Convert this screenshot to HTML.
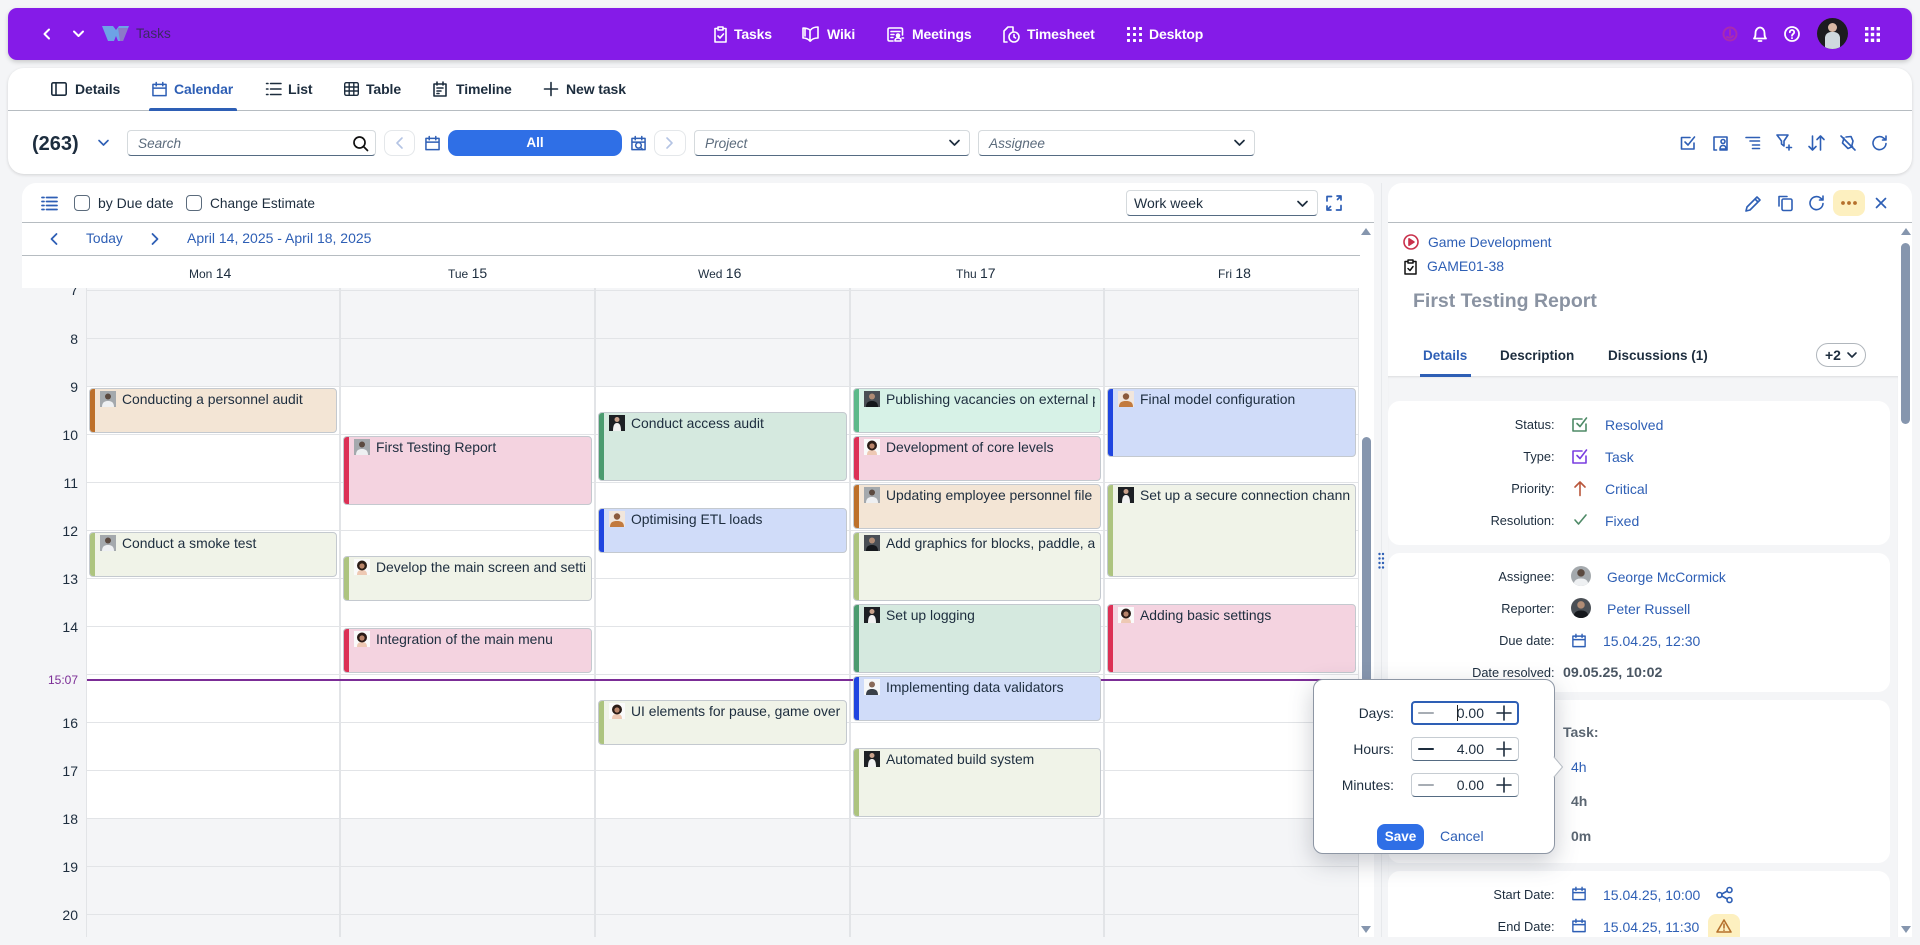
<!DOCTYPE html>
<html lang="en"><head><meta charset="utf-8"><title>Tasks</title>
<style>
html,body{margin:0;padding:0;width:1920px;height:945px;overflow:hidden;background:#f4f5f7;font-family:"Liberation Sans",sans-serif;color:#1d2d3e;font-size:14px}
div,span,svg{position:absolute;box-sizing:border-box}
.t{white-space:nowrap;line-height:18px;height:18px}
.b{font-weight:700}
svg{fill:none;stroke:currentColor;stroke-width:1.6;stroke-linecap:round;stroke-linejoin:round;overflow:visible}
.nv{color:#fff;font-weight:700;font-size:14px;top:25px;letter-spacing:-.15px}
.tb{font-weight:700;font-size:14px;top:80px;letter-spacing:-.1px;color:#1d2d3e}
.inp{background:#fff;border:1px solid #d5dadd;border-bottom:1px solid #556b82;border-radius:4px;height:26px;top:130px}
.ph{font-style:italic;color:#5b6b7c;font-size:13.6px;top:135px}
.ib{color:#2e5fb5}
.ev{border:1px solid #c4c9cf;border-radius:4px;overflow:hidden}
.ev i{position:absolute;left:-1px;top:-1px;bottom:-1px;width:5.5px;display:block}
.ev span{left:32px;top:1px;right:5px;height:18px;overflow:hidden;white-space:nowrap;line-height:18px;font-size:13.9px;color:#1d2d3e}
.ev svg{left:10px;top:2px;width:16px;height:16px;stroke:none;overflow:hidden}
.h{height:1px;background:#e2e4e7;left:87px;width:1271px}
.v{width:2px;background:#e2e4e7;top:288px;height:649px}
.hl{font-size:14px;color:#1d2d3e;line-height:18px;height:18px;width:30px;text-align:right;left:48px}
.lb{width:160px;left:1394.6px;text-align:right;font-size:12.8px;color:#1d2d3e;white-space:nowrap;line-height:18px;height:18px}
.val{color:#2e5fb5;font-size:14px;white-space:nowrap;line-height:18px;height:18px}
.card{left:1388px;width:502px;background:#fff;border-radius:12px}
.plb{width:80px;left:1314px;text-align:right;font-size:13.8px;color:#1d2d3e;line-height:18px;height:18px}
.pin{left:1411px;width:108px;height:24px;border:1px solid #c6ccd2;border-bottom:1px solid #556b82;border-radius:4px;background:#fff}
.pv{left:1440px;width:44px;text-align:right;font-size:14px;line-height:18px;height:18px}
.av{overflow:hidden;border-radius:50%;stroke:none}
</style></head><body>
<svg width="0" height="0" style="position:absolute"><defs>
<symbol id="cal" viewBox="0 0 16 16"><path d="M1 3h14v12H1zM1 7h14M4.500 1v3.500M11.500 1v3.500"/></symbol>
<symbol id="person" viewBox="0 0 16 16"><rect width="16" height="16" fill="#a4a9ad" stroke="none"/><path d="M2 16c0-5 3-6 6-6s6 1 6 6z" fill="#eef0f2" stroke="none"/><circle cx="8" cy="5.500" r="3" fill="#5b4a40" stroke="none"/></symbol>
<symbol id="dark" viewBox="0 0 16 16"><rect width="16" height="16" fill="#4a4f55" stroke="none"/><path d="M2 16c0-5 3-6 6-6s6 1 6 6z" fill="#15181c" stroke="none"/><circle cx="8" cy="5.500" r="3" fill="#b08c75" stroke="none"/></symbol>
<symbol id="woman" viewBox="0 0 16 16"><rect width="16" height="16" fill="#fafafa" stroke="none"/><path d="M3 16c0-4 2-5 5-5s5 1 5 5z" fill="#eec9b4" stroke="none"/><circle cx="8" cy="6.500" r="5" fill="#2a1c17" stroke="none"/><circle cx="8" cy="7" r="2.600" fill="#b8846a" stroke="none"/></symbol>
<symbol id="wd" viewBox="0 0 16 16"><rect width="16" height="16" fill="#1d2024" stroke="none"/><path d="M4 16c0-6 1.500-8 4-8s4 2 4 8z" fill="#f2f2f2" stroke="none"/><circle cx="8" cy="4.500" r="2.500" fill="#c9a28c" stroke="none"/></symbol>
<symbol id="org" viewBox="0 0 16 16"><rect width="16" height="16" fill="#f1e6dc" stroke="none"/><path d="M1 16c0-5 3-6 7-6s7 1 7 6z" fill="#c27a3e" stroke="none"/><circle cx="8" cy="5.500" r="3.200" fill="#8b5a3c" stroke="none"/></symbol>
<symbol id="man" viewBox="0 0 16 16"><rect width="16" height="16" fill="#f6f7f8" stroke="none"/><path d="M2 16c0-5 3-6 6-6s6 1 6 6z" fill="#3a4048" stroke="none"/><circle cx="8" cy="5.500" r="3" fill="#8a6a58" stroke="none"/></symbol>
</defs></svg>

<!-- top nav -->
<div style="left:8px;top:8px;width:1904px;height:52px;background:#851be8;border-radius:9px;box-shadow:0 2px 5px rgba(0,0,0,.18)"></div>
<svg style="left:43px;top:28px;width:8px;height:12px;color:#fff;stroke-width:2" viewBox="0 0 8 12"><path d="M6 1.500 1.500 6 6 10.500"/></svg>
<svg style="left:73px;top:30px;width:11px;height:8px;color:#fff;stroke-width:2" viewBox="0 0 11 8"><path d="M1 1.500 5.500 6 10 1.500"/></svg>
<svg style="left:102px;top:25px;width:27px;height:17px;stroke:none" viewBox="0 0 27 17"><path d="M0 1h11l3 4 3-4h10l-6 15h-5l-2-5-2 5H6z" fill="#6da3e6"/><path d="M16 3h10l-5 13h-3z" fill="#8c78c8"/></svg>
<div class="t" style="left:136px;top:25px;font-size:13.6px;color:#3b2a63">Tasks</div>

<svg style="left:714px;top:26px;width:13px;height:17px;color:#fff" viewBox="0 0 13 17"><path d="M4 2.500H1v13.500h11V2.500H9M4 1h5v3H4zM4 10l2 2 3.500-4"/></svg>
<div class="t nv" style="left:734px">Tasks</div>
<svg style="left:802px;top:26px;width:17px;height:16px;color:#fff" viewBox="0 0 17 16"><path d="M1 2v10c3 0 5 1 7 3V4C6 2.500 4 2 1 2zM8.500 15c1.500-2 4-3 7.500-3V1c-3 0-6 1-7.500 3M3 2v8"/></svg>
<div class="t nv" style="left:827px">Wiki</div>
<svg style="left:887px;top:27px;width:17px;height:15px;color:#fff" viewBox="0 0 17 15"><path d="M6 14H2.500Q1 14 1 12.500V2.500Q1 1 2.500 1h11.500Q15.500 1 15.500 2.500V8M4 4.500h9M4 7.500h3M4 10.500h2"/><circle cx="11" cy="8.500" r="1.500" fill="#fff"/><path d="M8 14c0-3 2-3 3-3s3 0 3 3zM15 11h1.500"/></svg>
<div class="t nv" style="left:912px">Meetings</div>
<svg style="left:1003px;top:26px;width:17px;height:17px;color:#fff" viewBox="0 0 17 17"><path d="M4 16H1V5l4-4h5v4"/><circle cx="11" cy="11" r="5"/><path d="M11 8.500V11l1.500 1"/></svg>
<div class="t nv" style="left:1027px">Timesheet</div>
<svg style="left:1127px;top:27px;width:15px;height:15px;stroke:none;fill:#fff" viewBox="0 0 15 15"><rect width="3" height="3" rx=".6"/><rect x="6" width="3" height="3" rx=".6"/><rect x="12" width="3" height="3" rx=".6"/><rect y="6" width="3" height="3" rx=".6"/><rect x="6" y="6" width="3" height="3" rx=".6"/><rect x="12" y="6" width="3" height="3" rx=".6"/><rect y="12" width="3" height="3" rx=".6"/><rect x="6" y="12" width="3" height="3" rx=".6"/><rect x="12" y="12" width="3" height="3" rx=".6"/></svg>
<div class="t nv" style="left:1149px">Desktop</div>

<svg style="left:1722px;top:26px;width:16px;height:16px;color:#a92bb0;stroke-width:2" viewBox="0 0 16 16"><circle cx="8" cy="8" r="6.500"/><path d="M8 4v5M5 11c2 1 4 1 6-1"/></svg>
<svg style="left:1753px;top:26px;width:14px;height:16px;color:#fff;stroke-width:1.800" viewBox="0 0 14 16"><path d="M1 12.500c1.500-1.500 1.500-3 1.500-5.500C2.500 4 4.500 1.500 7 1.500S11.500 4 11.500 7c0 2.500 0 4 1.500 5.500z"/><path d="M5.500 15h3"/></svg>
<svg style="left:1784px;top:26px;width:16px;height:16px;color:#fff;stroke-width:1.800" viewBox="0 0 16 16"><circle cx="8" cy="8" r="7"/><path d="M5.800 6.200C5.800 4.900 6.800 4 8 4s2.200.9 2.200 2.200C10.200 8 8 8 8 9.800M8 12v.2"/></svg>
<div style="left:1817px;top:18px;width:31px;height:31px;border-radius:50%;background:#1c1c20;overflow:hidden"><div style="left:11px;top:5px;width:9px;height:9px;border-radius:50%;background:#d8b8a4"></div><div style="left:8px;top:14px;width:15px;height:18px;border-radius:6px 6px 0 0;background:#cfd8de"></div></div>
<svg style="left:1865px;top:27px;width:15px;height:15px;stroke:none;fill:#fff" viewBox="0 0 15 15"><rect width="3.400" height="3.400"/><rect x="5.800" width="3.400" height="3.400"/><rect x="11.600" width="3.400" height="3.400"/><rect y="5.800" width="3.400" height="3.400"/><rect x="5.800" y="5.800" width="3.400" height="3.400"/><rect x="11.600" y="5.800" width="3.400" height="3.400"/><rect y="11.600" width="3.400" height="3.400"/><rect x="5.800" y="11.600" width="3.400" height="3.400"/><rect x="11.600" y="11.600" width="3.400" height="3.400"/></svg>

<!-- tabs panel -->
<div style="left:8px;top:68px;width:1904px;height:106px;background:#fff;border-radius:16px;box-shadow:0 1px 3px rgba(0,0,0,.14)"></div>
<div style="left:8px;top:110px;width:1904px;height:1px;background:#b6bcc1"></div>
<svg style="left:51px;top:82px;width:16px;height:14px;color:#1d2d3e" viewBox="0 0 16 14"><rect x=".8" y=".8" width="14.400" height="12.400" rx="1.500"/><path d="M5 1v12"/></svg>
<div class="t tb" style="left:75px">Details</div>
<svg style="left:152px;top:81px;width:15px;height:16px;color:#2e5fb5" viewBox="0 0 16 16"><use href="#cal"/></svg>
<div class="t tb" style="left:174px;color:#2e5fb5">Calendar</div>
<div style="left:149px;top:108px;width:88px;height:2.500px;background:#2e5fb5;border-radius:2px 2px 0 0"></div>
<svg style="left:266px;top:82px;width:15px;height:14px;color:#1d2d3e;stroke-width:1.500" viewBox="0 0 15 14"><path d="M4.500 1.500H15M4.500 7H15M4.500 12.500H15M.5 1.500h1.500M.5 7h1.500M.5 12.500h1.500"/></svg>
<div class="t tb" style="left:288px">List</div>
<svg style="left:344px;top:82px;width:15px;height:14px;color:#1d2d3e;stroke-width:1.400" viewBox="0 0 15 14"><rect x=".7" y=".7" width="13.600" height="12.600" rx="1.500"/><path d="M.7 5h13.600M.7 9h13.600M5.200 .7v12.600M9.800 .7v12.600"/></svg>
<div class="t tb" style="left:366px">Table</div>
<svg style="left:433px;top:81px;width:14px;height:16px;color:#1d2d3e" viewBox="0 0 14 16"><path d="M1 3h12v12H1zM4 1v3M10 1v3M4 7h6M4 10h4M4 12.500h2"/></svg>
<div class="t tb" style="left:456px">Timeline</div>
<svg style="left:544px;top:82px;width:14px;height:14px;color:#1d2d3e" viewBox="0 0 14 14"><path d="M7 .5v13M.5 7h13"/></svg>
<div class="t tb" style="left:566px">New task</div>

<!-- toolbar -->
<div class="t b" style="left:32px;top:133px;font-size:20px;line-height:22px;height:22px">(263)</div>
<svg style="left:98px;top:139px;width:11px;height:8px;color:#2e5fb5" viewBox="0 0 11 8"><path d="M1 1.500 5.500 6 10 1.500"/></svg>
<div class="inp" style="left:127px;width:249px"></div>
<div class="t ph" style="left:138px">Search</div>
<svg style="left:353px;top:136px;width:15px;height:15px;color:#111;stroke-width:1.700" viewBox="0 0 15 15"><circle cx="6.500" cy="6.500" r="5.500"/><path d="M10.500 10.500 14.500 14.500"/></svg>
<div style="left:384px;top:130px;width:31px;height:26px;border:1px solid #e4e7ea;border-radius:8px;background:#fff"></div>
<svg style="left:396px;top:137px;width:7px;height:12px;color:#b4c4e4" viewBox="0 0 7 12"><path d="M6 1 1 6l5 5"/></svg>
<svg style="left:425px;top:135px;width:15px;height:16px;color:#2e5fb5" viewBox="0 0 16 16"><use href="#cal"/></svg>
<div style="left:448px;top:130px;width:174px;height:26px;background:#2f6fe6;border-radius:9px"></div>
<div class="t b" style="left:448px;top:134px;width:174px;text-align:center;color:#fff;font-size:13.500px">All</div>
<svg style="left:631px;top:135px;width:15px;height:16px;color:#2e5fb5" viewBox="0 0 16 16"><use href="#cal"/><circle cx="8" cy="10.500" r="3"/><path d="M10 12.500l2.500 2.500"/></svg>
<div style="left:654px;top:130px;width:32px;height:26px;border:1px solid #e4e7ea;border-radius:8px;background:#fff"></div>
<svg style="left:666px;top:137px;width:7px;height:12px;color:#b4c4e4" viewBox="0 0 7 12"><path d="M1 1l5 5-5 5"/></svg>
<div class="inp" style="left:694px;width:276px"></div>
<div class="t ph" style="left:705px">Project</div>
<svg style="left:949px;top:139px;width:11px;height:8px;color:#1d2d3e;stroke-width:1.700" viewBox="0 0 11 8"><path d="M1 1.500 5.500 6 10 1.500"/></svg>
<div class="inp" style="left:978px;width:277px"></div>
<div class="t ph" style="left:989px">Assignee</div>
<svg style="left:1234px;top:139px;width:11px;height:8px;color:#1d2d3e;stroke-width:1.700" viewBox="0 0 11 8"><path d="M1 1.500 5.500 6 10 1.500"/></svg>

<svg class="ib" style="left:1680px;top:135px;width:16px;height:16px" viewBox="0 0 16 16"><path d="M14 8v6H1.500V2.500H10M5 7l3 3 6.500-8"/></svg>
<svg class="ib" style="left:1713px;top:135px;width:15px;height:16px" viewBox="0 0 15 16"><path d="M3.500 15H1V2h13v13H7"/><circle cx="10" cy="6.500" r="2"/><path d="M7 14c0-3 1.500-3.500 3-3.500s3 .5 3 3.500z"/></svg>
<svg class="ib" style="left:1745px;top:136px;width:15px;height:14px" viewBox="0 0 15 14"><path d="M1 1.500h13.500M5 5h9.500M7.500 9h7M7.500 12.500h7"/></svg>
<svg class="ib" style="left:1776px;top:134px;width:17px;height:17px" viewBox="0 0 17 17"><path d="M1 1h11L8 7v5L5.500 10V7zM13 11v5M10.500 13.500h5"/></svg>
<svg class="ib" style="left:1808px;top:135px;width:17px;height:16px" viewBox="0 0 17 16"><path d="M4.500 1v14M1 11.500 4.500 15 8 11.500M12.500 15V1M9 4.500 12.500 1 16 4.500"/></svg>
<svg class="ib" style="left:1840px;top:135px;width:16px;height:16px" viewBox="0 0 16 16"><path d="M1 1l14 14M4 3 2.500 8l5.500 5.500 4.500-2M6 2l5-.5 2 4.500-1 4"/></svg>
<svg class="ib" style="left:1872px;top:135px;width:16px;height:16px" viewBox="0 0 16 16"><path d="M14 8.500A6.500 6.500 0 1 1 11.500 3L14 5V1M14 5h-3.500"/></svg>

<!-- calendar panel -->
<div style="left:22px;top:183px;width:1352px;height:105px;background:#fff;border-radius:14px 14px 0 0"></div>
<div style="left:1359px;top:183px;width:15px;height:754px;background:#fff;border-radius:0 14px 0 0"></div>
<div style="left:22px;top:222px;width:1352px;height:1px;background:#b6bcc1"></div>
<div style="left:22px;top:255px;width:1338px;height:1px;background:#b6bcc1"></div>
<svg style="left:42px;top:196px;width:15px;height:15px;color:#2e5fb5;stroke-width:1.800" viewBox="0 0 15 15"><path d="M4.500 1.500H15M4.500 5.500H15M4.500 9.500H15M4.500 13.500H15M0 1.500h2M0 5.500h2M0 9.500h2M0 13.500h2"/></svg>
<div style="left:74px;top:195px;width:16px;height:16px;border:1px solid #5b6b7c;border-radius:4px;background:#fff"></div>
<div class="t" style="left:98px;top:194px;font-size:14px">by Due date</div>
<div style="left:186px;top:195px;width:16px;height:16px;border:1px solid #5b6b7c;border-radius:4px;background:#fff"></div>
<div class="t" style="left:210px;top:195px;font-size:13.700px">Change Estimate</div>
<div style="left:1126px;top:190px;width:192px;height:26px;background:#fff;border:1px solid #d5dadd;border-bottom:1px solid #556b82;border-radius:4px"></div>
<div class="t" style="left:1134px;top:194px;font-size:14px">Work week</div>
<svg style="left:1297px;top:200px;width:11px;height:8px;color:#1d2d3e;stroke-width:1.700" viewBox="0 0 11 8"><path d="M1 1.500 5.500 6 10 1.500"/></svg>
<svg class="ib" style="left:1326px;top:195px;width:16px;height:16px;stroke-width:1.700" viewBox="0 0 16 16"><path d="M1 6V1.500h4.500M15 10.500V15h-4.500M11 1h4v4M15 1l-3.500 3.500M1 11v4h4M1 15l3.500-3.500"/></svg>
<svg style="left:50px;top:233px;width:8px;height:12px;color:#2e5fb5;stroke-width:1.800" viewBox="0 0 8 12"><path d="M6.500 1 1.500 6l5 5"/></svg>
<div class="t" style="left:86px;top:230px;color:#2e5fb5;font-size:13.800px">Today</div>
<svg style="left:151px;top:233px;width:8px;height:12px;color:#2e5fb5;stroke-width:1.800" viewBox="0 0 8 12"><path d="M1.500 1l5 5-5 5"/></svg>
<div class="t" style="left:187px;top:229px;color:#2e5fb5;font-size:14px">April 14, 2025 - April 18, 2025</div>
<div class="t" style="left:189px;top:264px;font-size:12px">Mon <span style="position:static;font-size:14px">14</span></div>
<div class="t" style="left:448px;top:264px;font-size:12px">Tue <span style="position:static;font-size:14px">15</span></div>
<div class="t" style="left:698px;top:264px;font-size:12px">Wed <span style="position:static;font-size:14px">16</span></div>
<div class="t" style="left:956px;top:264px;font-size:12px">Thu <span style="position:static;font-size:14px">17</span></div>
<div class="t" style="left:1218px;top:264px;font-size:12px">Fri <span style="position:static;font-size:14px">18</span></div>

<!-- grid -->
<div style="left:87px;top:288px;width:1271px;height:649px;background:#fff"></div>
<div style="left:87px;top:288px;width:1271px;height:98px;background:#f4f5f7"></div>
<div style="left:87px;top:818px;width:1271px;height:119px;background:#f4f5f7"></div>
<div class="h" style="top:290px"></div><div class="h" style="top:338px"></div><div class="h" style="top:386px"></div><div class="h" style="top:434px"></div><div class="h" style="top:482px"></div><div class="h" style="top:530px"></div><div class="h" style="top:578px"></div><div class="h" style="top:626px"></div><div class="h" style="top:674px"></div><div class="h" style="top:722px"></div><div class="h" style="top:770px"></div><div class="h" style="top:818px"></div><div class="h" style="top:866px"></div><div class="h" style="top:914px"></div>
<div class="v" style="left:86px;width:1px"></div><div class="v" style="left:339px"></div><div class="v" style="left:594px"></div><div class="v" style="left:849px"></div><div class="v" style="left:1103px"></div><div class="v" style="left:1358px;width:1px"></div>
<div style="left:48px;top:288px;width:30px;height:9px;overflow:hidden"><div class="hl" style="left:0;top:-7px">7</div></div>
<div class="hl" style="top:330px">8</div><div class="hl" style="top:378px">9</div><div class="hl" style="top:426px">10</div><div class="hl" style="top:474px">11</div><div class="hl" style="top:522px">12</div><div class="hl" style="top:570px">13</div><div class="hl" style="top:618px">14</div><div class="hl" style="top:714px">16</div><div class="hl" style="top:762px">17</div><div class="hl" style="top:810px">18</div><div class="hl" style="top:858px">19</div><div class="hl" style="top:906px">20</div>
<div class="hl" style="top:671px;font-size:12px;color:#7b2d96">15:07</div>

<!-- events -->
<div class="ev" style="left:89px;top:388px;width:248px;height:45px;background:#f3e5d5"><i style="background:#bd702a"></i><svg><use href="#person"/></svg><span>Conducting a personnel audit</span></div>
<div class="ev" style="left:89px;top:532px;width:248px;height:45px;background:#f0f3e8"><i style="background:#adc47f"></i><svg><use href="#person"/></svg><span>Conduct a smoke test</span></div>
<div class="ev" style="left:343px;top:436px;width:249px;height:69px;background:#f4d3e0"><i style="background:#dc3055"></i><svg><use href="#person"/></svg><span>First Testing Report</span></div>
<div class="ev" style="left:343px;top:556px;width:249px;height:45px;background:#f0f3e8"><i style="background:#adc47f"></i><svg><use href="#woman"/></svg><span>Develop the main screen and settings</span></div>
<div class="ev" style="left:343px;top:628px;width:249px;height:45px;background:#f4d3e0"><i style="background:#dc3055"></i><svg><use href="#woman"/></svg><span>Integration of the main menu</span></div>
<div class="ev" style="left:598px;top:412px;width:249px;height:69px;background:#d5e9df"><i style="background:#4b9b6f"></i><svg><use href="#wd"/></svg><span>Conduct access audit</span></div>
<div class="ev" style="left:598px;top:508px;width:249px;height:45px;background:#d0dcf9"><i style="background:#1f45e0"></i><svg><use href="#org"/></svg><span>Optimising ETL loads</span></div>
<div class="ev" style="left:598px;top:700px;width:249px;height:45px;background:#f0f3e8"><i style="background:#adc47f"></i><svg><use href="#woman"/></svg><span>UI elements for pause, game over</span></div>
<div class="ev" style="left:853px;top:388px;width:248px;height:45px;background:#d7f2e7"><i style="background:#5cb98a"></i><svg><use href="#dark"/></svg><span>Publishing vacancies on external platforms</span></div>
<div class="ev" style="left:853px;top:436px;width:248px;height:45px;background:#f4d3e0"><i style="background:#dc3055"></i><svg><use href="#woman"/></svg><span>Development of core levels</span></div>
<div class="ev" style="left:853px;top:484px;width:248px;height:45px;background:#f3e5d5"><i style="background:#bd702a"></i><svg><use href="#person"/></svg><span>Updating employee personnel file</span></div>
<div class="ev" style="left:853px;top:532px;width:248px;height:69px;background:#f0f3e8"><i style="background:#adc47f"></i><svg><use href="#dark"/></svg><span>Add graphics for blocks, paddle, and ball</span></div>
<div class="ev" style="left:853px;top:604px;width:248px;height:69px;background:#d5e9df"><i style="background:#4b9b6f"></i><svg><use href="#wd"/></svg><span>Set up logging</span></div>
<div style="left:87px;top:679px;width:1271px;height:2px;background:#7b2d96"></div>
<div class="ev" style="left:853px;top:676px;width:248px;height:45px;background:#d0dcf9"><i style="background:#1f45e0"></i><svg><use href="#man"/></svg><span>Implementing data validators</span></div>
<div class="ev" style="left:853px;top:748px;width:248px;height:69px;background:#f0f3e8"><i style="background:#adc47f"></i><svg><use href="#wd"/></svg><span>Automated build system</span></div>
<div class="ev" style="left:1107px;top:388px;width:249px;height:69px;background:#d0dcf9"><i style="background:#1f45e0"></i><svg><use href="#org"/></svg><span>Final model configuration</span></div>
<div class="ev" style="left:1107px;top:484px;width:249px;height:93px;background:#f0f3e8"><i style="background:#adc47f"></i><svg><use href="#wd"/></svg><span>Set up a secure connection channel</span></div>
<div class="ev" style="left:1107px;top:604px;width:249px;height:69px;background:#f4d3e0"><i style="background:#dc3055"></i><svg><use href="#woman"/></svg><span>Adding basic settings</span></div>

<!-- calendar scrollbar -->
<div style="left:1362px;top:437px;width:9px;height:343px;background:#8696ae;border-radius:5px"></div>
<svg style="left:1361px;top:228px;width:10px;height:7px;stroke:none;fill:#8696ae" viewBox="0 0 10 7"><path d="M5 0l5 7H0z"/></svg>
<svg style="left:1361px;top:926px;width:10px;height:7px;stroke:none;fill:#8696ae" viewBox="0 0 10 7"><path d="M0 0h10L5 7z"/></svg>

<!-- splitter -->
<div style="left:1381px;top:183px;width:1px;height:754px;background:#e7e9ec"></div>
<svg style="left:1378px;top:552px;width:7px;height:17px;stroke:none;fill:#2e5fb5;background:#f4f5f7" viewBox="0 0 7 17"><circle cx="1.500" cy="2" r="1.200"/><circle cx="5" cy="2" r="1.200"/><circle cx="1.500" cy="6.500" r="1.200"/><circle cx="5" cy="6.500" r="1.200"/><circle cx="1.500" cy="11" r="1.200"/><circle cx="5" cy="11" r="1.200"/><circle cx="1.500" cy="15.500" r="1.200"/><circle cx="5" cy="15.500" r="1.200"/></svg>

<!-- right panel -->
<div style="left:1388px;top:183px;width:524px;height:754px;background:#fff;border-radius:14px 14px 0 0"></div>
<div style="left:1388px;top:222px;width:524px;height:1px;background:#b6bcc1"></div>
<svg class="ib" style="left:1745px;top:195px;width:17px;height:17px" viewBox="0 0 17 17"><path d="M1 16l1-4L12 2l3 3L5 15zM10 4l3 3"/></svg>
<svg class="ib" style="left:1778px;top:195px;width:15px;height:16px" viewBox="0 0 15 16"><path d="M1 11V1.500h8"/><rect x="4" y="4" width="10" height="11.500" rx="1.500"/></svg>
<svg class="ib" style="left:1809px;top:195px;width:16px;height:16px" viewBox="0 0 16 16"><path d="M14 8.500A6.500 6.500 0 1 1 11.500 3L14 5V1M14 5h-3.500"/></svg>
<div style="left:1833px;top:190px;width:32px;height:26px;background:#fdf0c0;border-radius:8px"></div>
<svg style="left:1841px;top:201px;width:16px;height:4px;stroke:none;fill:#b5702c" viewBox="0 0 16 4"><circle cx="2" cy="2" r="1.900"/><circle cx="8" cy="2" r="1.900"/><circle cx="14" cy="2" r="1.900"/></svg>
<svg class="ib" style="left:1876px;top:198px;width:10px;height:10px;stroke-width:1.700" viewBox="0 0 10 10"><path d="M.5.500l9 9M9.500.500l-9 9"/></svg>
<svg style="left:1403px;top:234px;width:16px;height:16px;color:#c9304b;stroke:#c9304b" viewBox="0 0 16 16"><circle cx="8" cy="8" r="7"/><path d="M6 4.800v6.400L11 8z" fill="#c9304b"/></svg>
<div class="val" style="left:1428px;top:233px;font-size:13.900px">Game Development</div>
<svg style="left:1404px;top:259px;width:13px;height:16px;color:#111;stroke-width:1.500" viewBox="0 0 13 16"><path d="M4 2.500H1V15h11V2.500H9M4 1h5v3H4zM4 9.500l2 2 3-4"/></svg>
<div class="val" style="left:1427px;top:257px">GAME01-38</div>
<div class="t b" style="left:1413px;top:289px;font-size:19.500px;line-height:24px;height:24px;color:#8a93a2">First Testing Report</div>
<div class="t b" style="left:1423px;top:347px;color:#2e5fb5;font-size:13.500px">Details</div>
<div class="t b" style="left:1500px;top:347px;font-size:13.500px">Description</div>
<div class="t b" style="left:1608px;top:347px;font-size:13.500px">Discussions (1)</div>
<div style="left:1816px;top:343px;width:50px;height:24px;border:1px solid #b0b6bc;border-radius:12px;background:#fff"></div>
<div class="t b" style="left:1825px;top:346px;font-size:14px">+2</div>
<svg style="left:1847px;top:352px;width:10px;height:7px;color:#1d2d3e" viewBox="0 0 10 7"><path d="M1 1l4 4 4-4"/></svg>

<!-- details area -->
<div style="left:1388px;top:376px;width:510px;height:561px;background:#f4f5f7;box-shadow:inset 0 2px 2px -1px rgba(0,0,0,.1)"></div>
<div style="left:1420px;top:374px;width:51px;height:2.500px;background:#2e5fb5"></div>
<div style="left:1901px;top:243px;width:9px;height:181px;background:#8696ae;border-radius:5px"></div>
<svg style="left:1901px;top:228px;width:10px;height:7px;stroke:none;fill:#8696ae" viewBox="0 0 10 7"><path d="M5 0l5 7H0z"/></svg>
<svg style="left:1901px;top:926px;width:10px;height:7px;stroke:none;fill:#8696ae" viewBox="0 0 10 7"><path d="M0 0h10L5 7z"/></svg>

<div class="card" style="top:401px;height:144px"></div>
<div class="lb" style="top:416px">Status:</div>
<svg style="left:1572px;top:417px;width:16px;height:15px;color:#4e8a67" viewBox="0 0 16 15"><path d="M14 7v7H1V2h9M5 6.500l3 3 6.500-8.500"/></svg>
<div class="val" style="left:1605px;top:416px">Resolved</div>
<div class="lb" style="top:448px">Type:</div>
<svg style="left:1572px;top:449px;width:16px;height:15px;color:#7a3ee0" viewBox="0 0 16 15"><path d="M14 7v7H1V2h9M5 6.500l3 3 6.500-8.500"/></svg>
<div class="val" style="left:1605px;top:448px">Task</div>
<div class="lb" style="top:480px">Priority:</div>
<svg style="left:1574px;top:481px;width:12px;height:15px;color:#b9573c" viewBox="0 0 12 15"><path d="M6 14.500V1M1 6l5-5 5 5"/></svg>
<div class="val" style="left:1605px;top:480px">Critical</div>
<div class="lb" style="top:512px">Resolution:</div>
<svg style="left:1574px;top:514px;width:13px;height:11px;color:#4e8a67" viewBox="0 0 13 11"><path d="M1 6l3.500 4L12 1"/></svg>
<div class="val" style="left:1605px;top:512px">Fixed</div>

<div class="card" style="top:553px;height:139px"></div>
<div class="lb" style="top:568px">Assignee:</div>
<svg class="av" style="left:1571px;top:566px;width:20px;height:20px" viewBox="0 0 16 16"><use href="#person"/></svg>
<div class="val" style="left:1607px;top:569px;font-size:13.800px">George McCormick</div>
<div class="lb" style="top:600px">Reporter:</div>
<svg class="av" style="left:1571px;top:598px;width:20px;height:20px" viewBox="0 0 16 16"><use href="#dark"/></svg>
<div class="val" style="left:1607px;top:600px">Peter Russell</div>
<div class="lb" style="top:632px">Due date:</div>
<svg style="left:1572px;top:633px;width:14px;height:15px;color:#2e5fb5" viewBox="0 0 16 16"><use href="#cal"/></svg>
<div class="val" style="left:1603px;top:632px">15.04.25, 12:30</div>
<div class="lb" style="top:664px">Date resolved:</div>
<div class="val" style="left:1563px;top:664px;color:#4a5663;font-weight:700;font-size:14.200px">09.05.25, 10:02</div>

<div class="card" style="top:700px;height:163px"></div>
<div class="val b" style="left:1563px;top:723px;color:#5b6672;font-weight:700">Task:</div>
<div class="val" style="left:1571px;top:758px">4h</div>
<div class="val b" style="left:1571px;top:792px;color:#5b6672;font-weight:700">4h</div>
<div class="val b" style="left:1571px;top:827px;color:#5b6672;font-weight:700">0m</div>

<div class="card" style="top:871px;height:66px;border-radius:12px 12px 0 0"></div>
<div class="lb" style="top:886px">Start Date:</div>
<svg style="left:1572px;top:886px;width:14px;height:15px;color:#2e5fb5" viewBox="0 0 16 16"><use href="#cal"/></svg>
<div class="val" style="left:1603px;top:886px">15.04.25, 10:00</div>
<svg class="ib" style="left:1716px;top:887px;width:17px;height:16px" viewBox="0 0 17 16"><circle cx="3.500" cy="8" r="2.500"/><circle cx="13.500" cy="3" r="2.500"/><circle cx="13.500" cy="13" r="2.500"/><path d="M5.800 7l5.500-3M5.800 9l5.500 3"/></svg>
<div class="lb" style="top:918px">End Date:</div>
<svg style="left:1572px;top:918px;width:14px;height:15px;color:#2e5fb5" viewBox="0 0 16 16"><use href="#cal"/></svg>
<div class="val" style="left:1603px;top:918px">15.04.25, 11:30</div>
<div style="left:1708px;top:914px;width:32px;height:23px;background:#fdf0c0;border-radius:8px 8px 0 0"></div>
<svg style="left:1716px;top:919px;width:16px;height:14px;color:#b5702c" viewBox="0 0 16 14"><path d="M8 1l7 12H1zM8 5v4M8 11v.2"/></svg>

<!-- popover -->
<div style="left:1313px;top:679px;width:242px;height:175px;background:#fff;border:1px solid #8d96a4;border-radius:10px;box-shadow:0 8px 24px rgba(60,70,85,.28)"></div>
<svg style="left:1554px;top:756px;width:10px;height:22px;stroke:#b8bec5;stroke-width:1;fill:#fff" viewBox="0 0 10 22"><path d="M0 1l8.500 10L0 21"/></svg>
<div class="plb" style="top:705px">Days:</div>
<div class="pin" style="top:701px;border:2px solid #2e5fb5"></div>
<svg style="left:1419px;top:712px;width:14px;height:2px;color:#a7adb4;stroke-width:2" viewBox="0 0 14 2"><path d="M0 1h14"/></svg>
<div style="left:1457px;top:705px;width:1px;height:16px;background:#222"></div>
<div class="pv" style="top:704px">0.00</div>
<svg style="left:1497px;top:706px;width:14px;height:14px;color:#1d2d3e" viewBox="0 0 14 14"><path d="M7 0v14M0 7h14"/></svg>
<div class="plb" style="top:741px">Hours:</div>
<div class="pin" style="top:737px"></div>
<svg style="left:1419px;top:748px;width:14px;height:2px;color:#1d2d3e;stroke-width:2" viewBox="0 0 14 2"><path d="M0 1h14"/></svg>
<div class="pv" style="top:740px">4.00</div>
<svg style="left:1497px;top:742px;width:14px;height:14px;color:#1d2d3e" viewBox="0 0 14 14"><path d="M7 0v14M0 7h14"/></svg>
<div class="plb" style="top:777px">Minutes:</div>
<div class="pin" style="top:773px"></div>
<svg style="left:1419px;top:784px;width:14px;height:2px;color:#a7adb4;stroke-width:2" viewBox="0 0 14 2"><path d="M0 1h14"/></svg>
<div class="pv" style="top:776px">0.00</div>
<svg style="left:1497px;top:778px;width:14px;height:14px;color:#1d2d3e" viewBox="0 0 14 14"><path d="M7 0v14M0 7h14"/></svg>
<div style="left:1377px;top:824px;width:47px;height:26px;background:#2f6fe6;border-radius:8px"></div>
<div class="t b" style="left:1377px;top:828px;width:47px;text-align:center;color:#fff;font-size:13.500px">Save</div>
<div class="t" style="left:1440px;top:827px;color:#2e5fb5;font-size:14px">Cancel</div>
</body></html>
